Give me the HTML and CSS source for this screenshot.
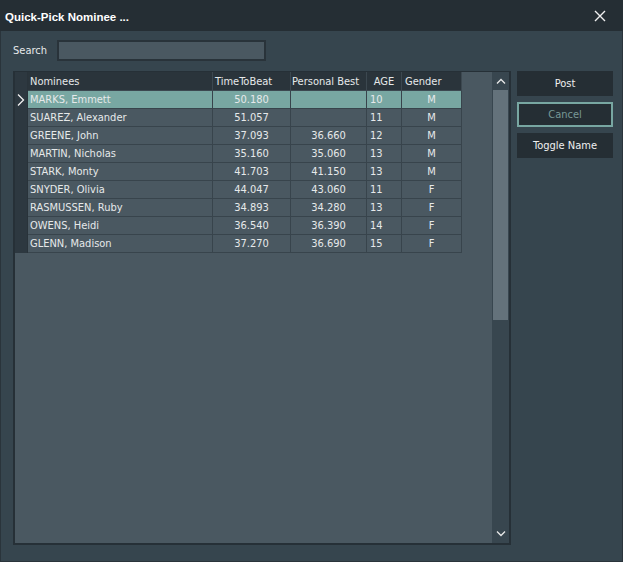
FILE: index.html
```html
<!DOCTYPE html>
<html>
<head>
<meta charset="utf-8">
<link rel="stylesheet" href="styles.css">
</head>
<body>
<div class="window">
  <div class="titlebar">
    <span class="title">Quick-Pick Nominee ...</span>
    <svg class="close" width="12" height="12" viewBox="0 0 12 12"><path d="M1 1 L11 11 M11 1 L1 11" stroke="#f0f0f0" stroke-width="1.4"/></svg>
  </div>
  <div class="content">
    <div class="search-row">
      <span class="search-label">Search</span>
      <div class="search-input"></div>
    </div>
    <div class="main">
      <div class="grid">
        <div class="table">
          <div class="row head">
            <div class="sel"></div>
            <div class="c name">Nominees</div>
            <div class="c ttb">TimeToBeat</div>
            <div class="c pb">Personal Best</div>
            <div class="c age hc">AGE</div>
            <div class="c gen">Gender</div>
          </div>
          <div class="row selected">
            <div class="sel"><svg width="8" height="12" viewBox="0 0 8 12"><path d="M1 0.5 L6.5 6 L1 11.5" fill="none" stroke="#f0f0f0" stroke-width="1.3"/></svg></div>
            <div class="c name">MARKS, Emmett</div>
            <div class="c ttb">50.180</div>
            <div class="c pb"></div>
            <div class="c age">10</div>
            <div class="c gen">M</div>
          </div>
          <div class="row"><div class="sel"></div><div class="c name">SUAREZ, Alexander</div><div class="c ttb">51.057</div><div class="c pb"></div><div class="c age">11</div><div class="c gen">M</div></div>
          <div class="row"><div class="sel"></div><div class="c name">GREENE, John</div><div class="c ttb">37.093</div><div class="c pb">36.660</div><div class="c age">12</div><div class="c gen">M</div></div>
          <div class="row"><div class="sel"></div><div class="c name">MARTIN, Nicholas</div><div class="c ttb">35.160</div><div class="c pb">35.060</div><div class="c age">13</div><div class="c gen">M</div></div>
          <div class="row"><div class="sel"></div><div class="c name">STARK, Monty</div><div class="c ttb">41.703</div><div class="c pb">41.150</div><div class="c age">13</div><div class="c gen">M</div></div>
          <div class="row"><div class="sel"></div><div class="c name">SNYDER, Olivia</div><div class="c ttb">44.047</div><div class="c pb">43.060</div><div class="c age">11</div><div class="c gen">F</div></div>
          <div class="row"><div class="sel"></div><div class="c name">RASMUSSEN, Ruby</div><div class="c ttb">34.893</div><div class="c pb">34.280</div><div class="c age">13</div><div class="c gen">F</div></div>
          <div class="row"><div class="sel"></div><div class="c name">OWENS, Heidi</div><div class="c ttb">36.540</div><div class="c pb">36.390</div><div class="c age">14</div><div class="c gen">F</div></div>
          <div class="row"><div class="sel"></div><div class="c name">GLENN, Madison</div><div class="c ttb">37.270</div><div class="c pb">36.690</div><div class="c age">15</div><div class="c gen">F</div></div>
        </div>
        <div class="scrollbar">
          <div class="arrow up"><svg width="10" height="6" viewBox="0 0 10 6"><path d="M1 5.5 L5 1.5 L9 5.5" fill="none" stroke="#e8e8e8" stroke-width="1.3"/></svg></div>
          <div class="thumb"></div>
          <div class="track"></div>
          <div class="arrow down"><svg width="10" height="6" viewBox="0 0 10 6"><path d="M1 0.5 L5 4.5 L9 0.5" fill="none" stroke="#e8e8e8" stroke-width="1.3"/></svg></div>
        </div>
      </div>
      <div class="buttons">
        <div class="btn">Post</div>
        <div class="btn cancel">Cancel</div>
        <div class="btn">Toggle Name</div>
      </div>
    </div>
  </div>
</div>
</body>
</html>
```
FILE: styles.css
```css
html, body {
  margin: 0;
  padding: 0;
  background: #36454e;
}
body {
  font-family: "DejaVu Sans Condensed", "DejaVu Sans", sans-serif;
  font-stretch: condensed;
  font-size: 11px;
  color: #e6e9ea;
}
.window {
  width: 623px;
  height: 562px;
  box-sizing: border-box;
  border: 1px solid #2a343b;
  border-top: none;
  background: #36454e;
  display: flex;
  flex-direction: column;
}
.titlebar {
  height: 31px;
  background: #252e34;
  display: flex;
  align-items: center;
  justify-content: space-between;
  padding: 0 17px 0 5px;
  margin: 0 -1px;
}
.title {
  font-family: "Liberation Sans", Arial, sans-serif;
  font-stretch: normal;
  font-weight: bold;
  font-size: 11.5px;
  color: #ffffff;
  margin-top: 2px;
}
.close {
  margin-top: 1px;
}
.content {
  padding: 9px 0 0 12px;
}
.search-row {
  display: flex;
  align-items: center;
  height: 21px;
}
.search-label {
  width: 44px;
}
.search-input {
  width: 205px;
  height: 17px;
  border: 2px solid #29333a;
  background: #4a5861;
}
.main {
  display: flex;
  margin-top: 10px;
  gap: 6px;
}
.grid {
  width: 494px;
  height: 471px;
  border: 2px solid #263037;
  border-top-width: 1px;
  background: #4a5861;
  display: flex;
  justify-content: space-between;
}
.table {
  display: flex;
  flex-direction: column;
}
.row {
  display: flex;
  height: 18px;
}
.row.head {
  height: 19px;
}
.row .sel {
  width: 12px;
  background: #2d3840;
  border-right: 1px solid #29333a;
  display: flex;
  align-items: center;
  justify-content: center;
}
.c {
  box-sizing: border-box;
  border-right: 1px solid #38444c;
  border-bottom: 1px solid #38444c;
  line-height: 17px;
  padding: 0 3px;
  white-space: nowrap;
  overflow: hidden;
}
.name { width: 185px; padding-left: 2px; }
.ttb { width: 78px; text-align: center; }
.pb { width: 76px; text-align: center; }
.age { width: 35px; }
.gen { width: 60px; text-align: center; }
.head .c {
  background: #2a343b;
  text-align: left;
  border-color: #3c4850;
  line-height: 19px;
}
.head .c.hc { text-align: center; }
.head .ttb { padding-left: 2px; }
.head .pb { padding-left: 1px; }
.row.selected .c {
  background: #78a7a2;
}
.scrollbar {
  width: 17px;
  background: #38464f;
  display: flex;
  flex-direction: column;
}
.arrow {
  height: 18px;
  display: flex;
  align-items: center;
  justify-content: center;
}
.arrow.down {
  margin-top: auto;
}
.thumb {
  height: 230px;
  margin: 0 1px;
  background: #64727b;
}
.buttons {
  width: 96px;
  display: flex;
  flex-direction: column;
  gap: 6px;
}
.btn {
  height: 25px;
  box-sizing: border-box;
  background: #252e34;
  display: flex;
  align-items: center;
  justify-content: center;
  color: #f0f0f0;
}
.btn.cancel {
  border: 2px solid #78a7a2;
  color: #789896;
}
```
